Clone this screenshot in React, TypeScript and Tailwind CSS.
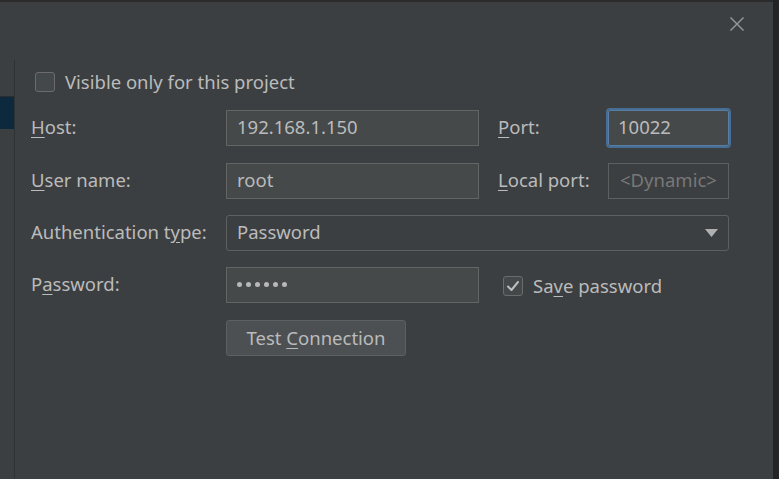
import React from 'react';

const font = { fontFamily: '"Noto Sans", "Open Sans", sans-serif' };

function Mn({ children }: { children: React.ReactNode }) {
  return <u className="underline underline-offset-[3px] decoration-1">{children}</u>;
}

function Checkbox({ checked = false }: { checked?: boolean }) {
  return (
    <span className="flex h-[20px] w-[20px] shrink-0 items-center justify-center rounded-[3px] border border-[#6b6b6b] bg-[#43494a]">
      {checked && (
        <svg width="14" height="12" viewBox="0 0 14 12" fill="none">
          <path d="M2 6.5 L5.5 10 L12 2" stroke="#bdbdbd" strokeWidth="2" strokeLinecap="round" strokeLinejoin="round" />
        </svg>
      )}
    </span>
  );
}

function Field({ value, className = '' }: { value: React.ReactNode; className?: string }) {
  return (
    <div className={`flex h-[36px] items-center border border-[#646464] bg-[#45494a] px-[10px] pb-[2px] text-[#bbbbbb] ${className}`}>
      {value}
    </div>
  );
}

function Label({ children, className = '' }: { children: React.ReactNode; className?: string }) {
  return <div className={`flex h-[36px] shrink-0 items-center pb-[2px] text-[#bbbbbb] ${className}`}>{children}</div>;
}

export default function App() {
  return (
    <div className="flex h-[479px] w-[779px] bg-[#3c3f41] text-[18.5px] leading-none" style={font}>
      <div className="flex w-[773px] flex-col">
        <div className="h-[2px] bg-[#2b2b2b]" />
        <div className="flex h-[58px] justify-end pr-[28px] pt-[14px]">
          <svg width="16" height="16" viewBox="0 0 16 16">
            <path d="M1.5 1.5 L14.5 14.5 M14.5 1.5 L1.5 14.5" stroke="#9a9a9a" strokeWidth="1.4" />
          </svg>
        </div>
        <div className="flex flex-1">
          <div className="w-[15px] shrink-0 border-r border-[#2f3234]">
            <div className="mt-[36px] h-[33px] border-t border-[#2b2d2f] bg-[#0d293e]" />
          </div>
          <div className="flex flex-1 flex-col pl-[16px] pt-[12px]">
            <div className="ml-[4px] flex h-[20px] items-center gap-[10px] text-[#bbbbbb]">
              <Checkbox />
              <span>Visible only for this project</span>
            </div>

            <div className="mt-[18px] flex">
              <Label className="w-[195px]">
                <span><Mn>H</Mn>ost:</span>
              </Label>
              <Field value="192.168.1.150" className="w-[253px]" />
              <Label className="ml-[19px] w-[110px]">
                <span><Mn>P</Mn>ort:</span>
              </Label>
              <div className="flex h-[36px] w-[121px] items-center rounded-[2px] border border-[#5a7ea3] bg-[#45494a] px-[9px] pb-[2px] text-[#bbbbbb] outline outline-2 outline-[#466d94]">
                10022
              </div>
            </div>

            <div className="mt-[17px] flex">
              <Label className="w-[195px]">
                <span><Mn>U</Mn>ser name:</span>
              </Label>
              <Field value="root" className="w-[253px]" />
              <Label className="ml-[19px] w-[110px]">
                <span><Mn>L</Mn>ocal port:</span>
              </Label>
              <div className="flex h-[36px] w-[121px] items-center border border-[#5e6060] px-[11px] pb-[2px] text-[#787878]">
                &lt;Dynamic&gt;
              </div>
            </div>

            <div className="mt-[16px] flex">
              <Label className="w-[195px]">
                <span>Authentication t<Mn>y</Mn>pe:</span>
              </Label>
              <div className="flex h-[36px] w-[503px] items-center justify-between rounded-[3px] border border-[#5e6060] pb-[2px] pl-[10px] pr-[10px] text-[#bbbbbb]">
                <span>Password</span>
                <svg width="13" height="8" viewBox="0 0 13 8" className="mt-[2px]">
                  <path d="M0 0 H13 L6.5 8 Z" fill="#b0b0b0" />
                </svg>
              </div>
            </div>

            <div className="mt-[16px] flex">
              <Label className="w-[195px]">
                <span>P<Mn>a</Mn>ssword:</span>
              </Label>
              <Field
                value={
                  <span className="flex gap-[4px]">
                    {[0, 1, 2, 3, 4, 5].map((i) => (
                      <span key={i} className="h-[5px] w-[5px] rounded-full bg-[#b8b8b8]" />
                    ))}
                  </span>
                }
                className="w-[253px]"
              />
              <div className="ml-[24px] flex h-[36px] items-center gap-[10px] pt-[2px] text-[#bbbbbb]">
                <Checkbox checked />
                <span>Sa<Mn>v</Mn>e password</span>
              </div>
            </div>

            <div className="mt-[17px] flex pl-[195px]">
              <button className="flex h-[36px] w-[180px] items-center justify-center rounded-[3px] border border-[#5e6060] bg-[#4c5052] text-[#bbbbbb]">
                <span>Test <Mn>C</Mn>onnection</span>
              </button>
            </div>
          </div>
        </div>
      </div>
      <div className="flex-1 bg-[#232425]" />
    </div>
  );
}
